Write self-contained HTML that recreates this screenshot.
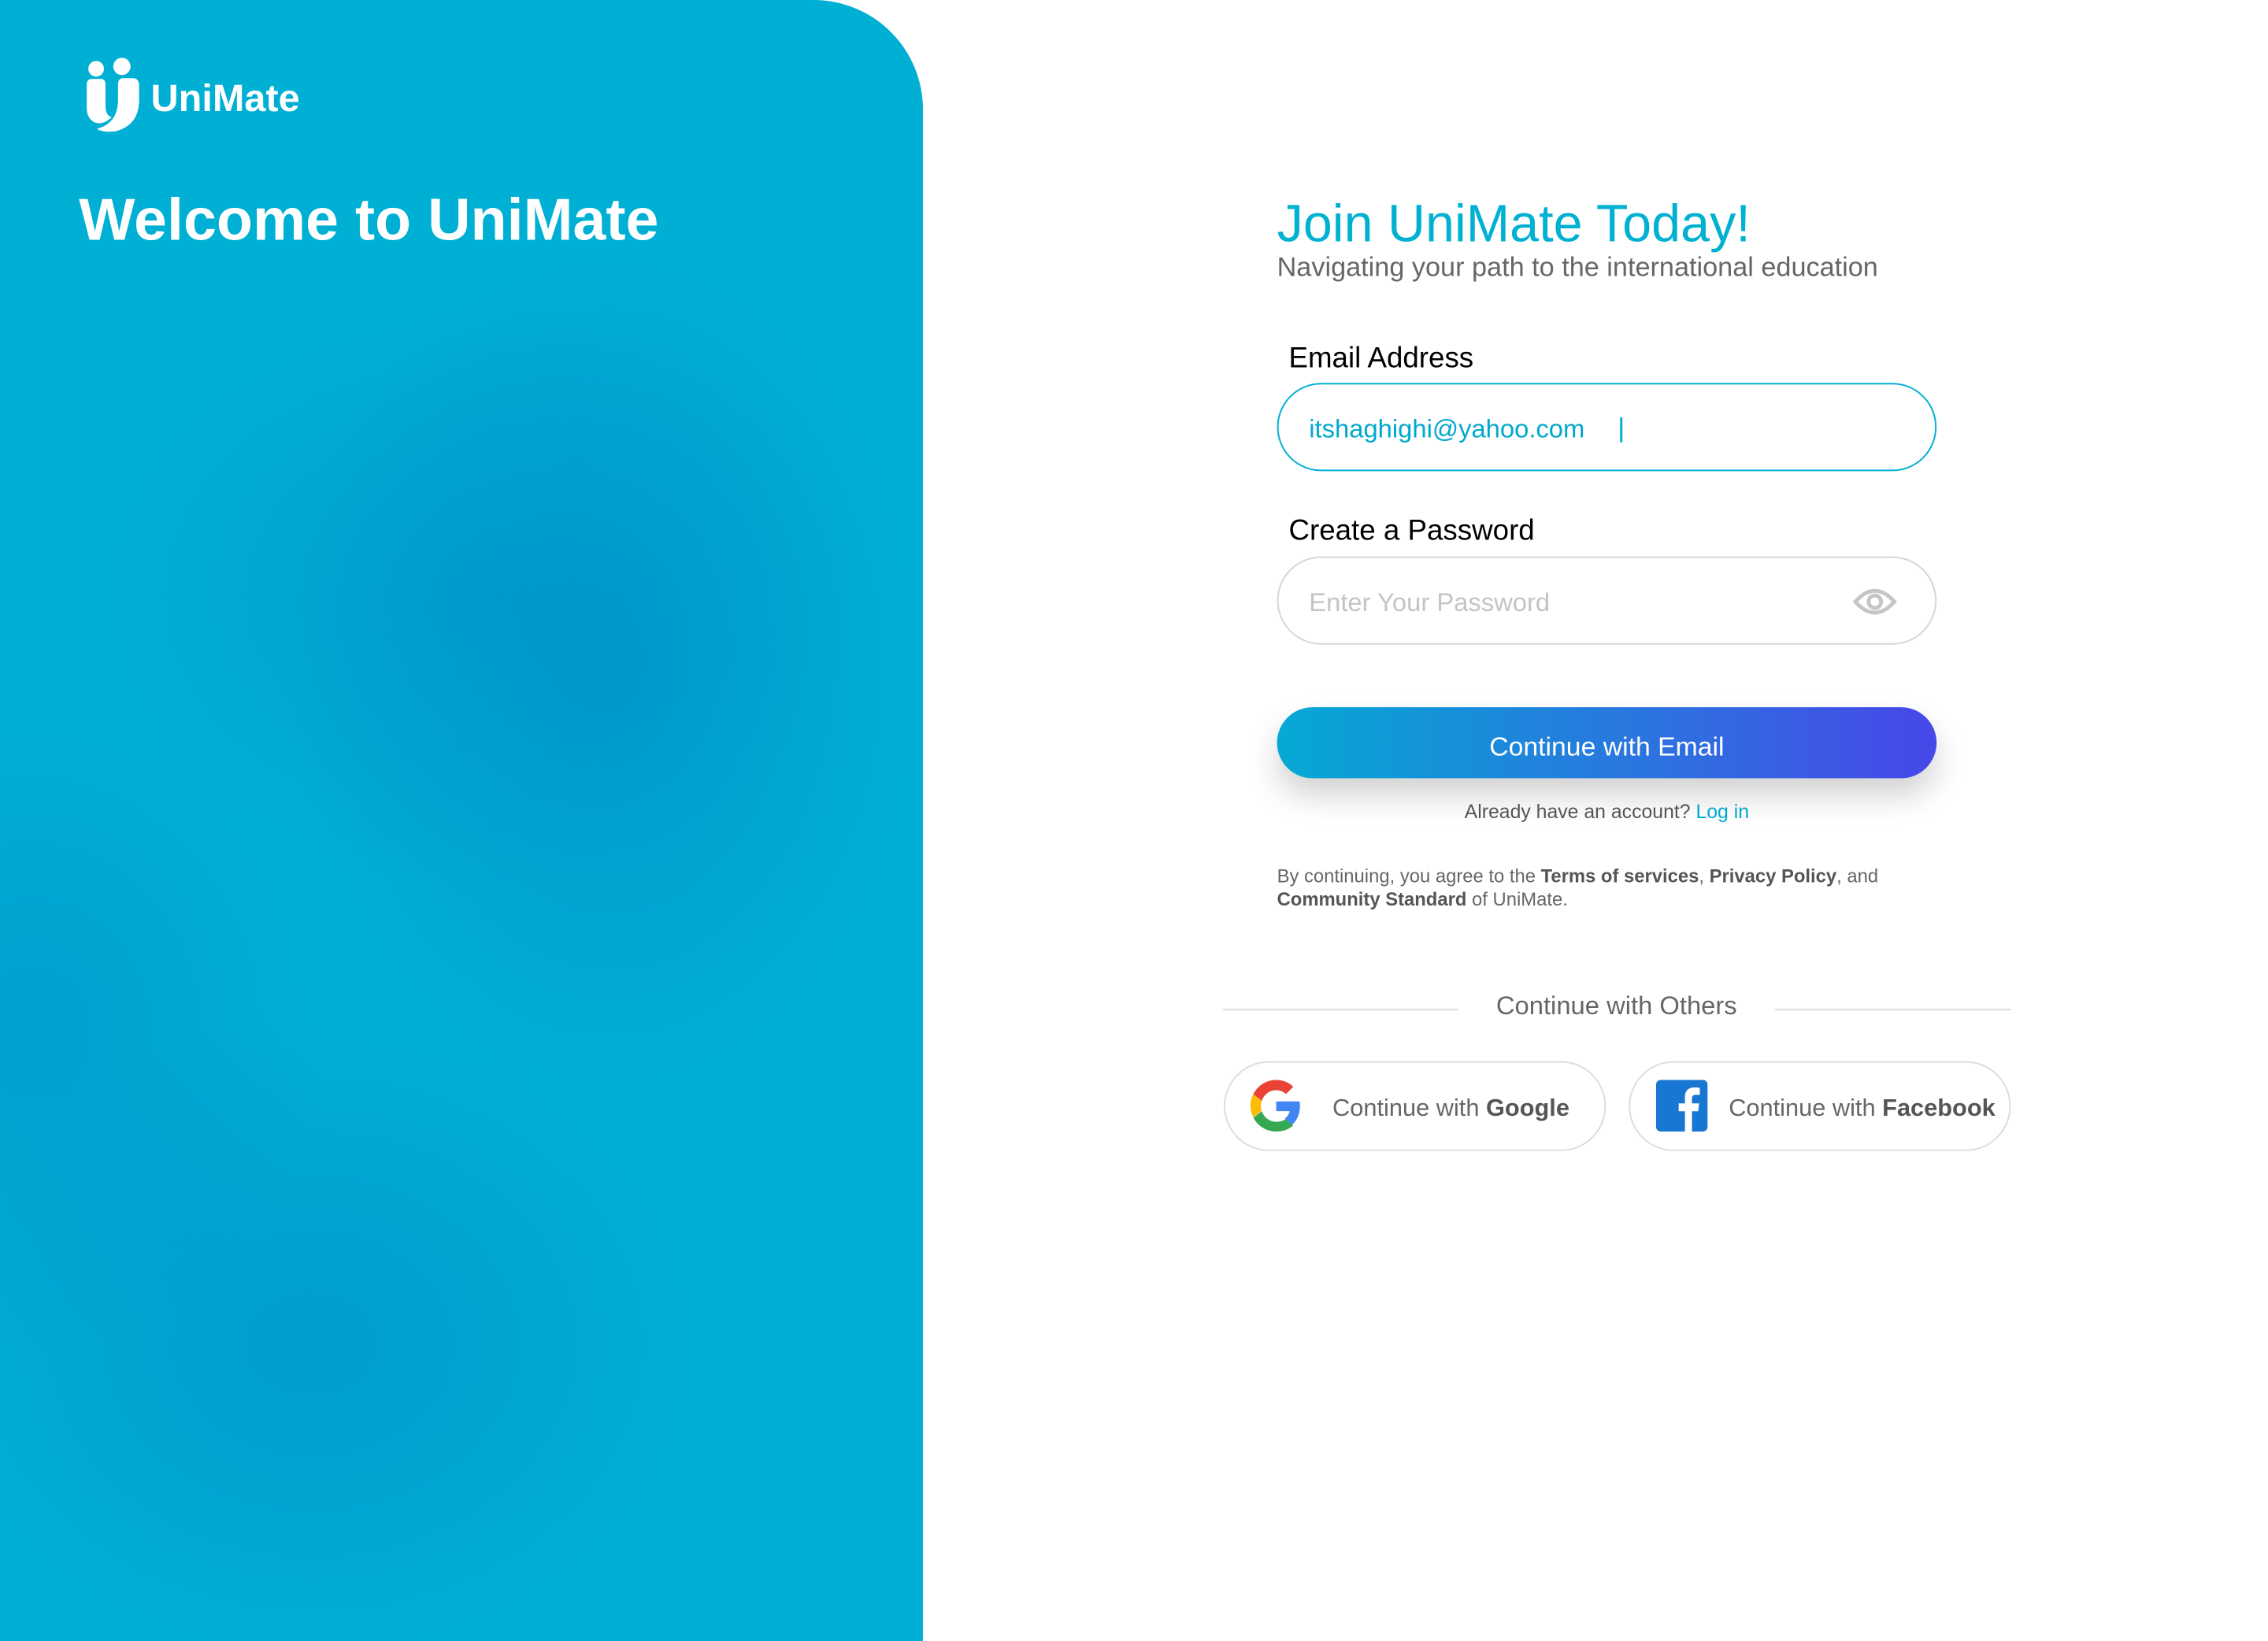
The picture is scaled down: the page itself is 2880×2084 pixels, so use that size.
<!DOCTYPE html>
<html><head><meta charset="utf-8"><style>
*{margin:0;padding:0;box-sizing:border-box}
body{width:2880px;height:2048px;background:#fff;font-family:"Liberation Sans",sans-serif;position:relative;overflow:hidden}
#w{position:absolute;left:0;top:0;width:2902px;height:2064px;transform:scale(0.9924);transform-origin:0 0}
.left{position:absolute;left:0;top:0;width:1181px;height:2100px;border-top-right-radius:140px;overflow:hidden;
background:
radial-gradient(ellipse 420px 560px at 780px 860px,rgba(0,140,200,.6),rgba(0,140,200,0)),
radial-gradient(ellipse 500px 380px at 600px 760px,rgba(0,140,200,.45),rgba(0,140,200,0)),
radial-gradient(ellipse 520px 420px at 400px 1720px,rgba(0,140,200,.55),rgba(0,140,200,0)),
radial-gradient(ellipse 380px 420px at 40px 1320px,rgba(0,140,200,.45),rgba(0,140,200,0)),
#00b0d4}
.abs{position:absolute;white-space:nowrap}
.input{position:absolute;left:1634px;width:844px;height:113px;border-radius:57px;background:#fff}
.soc{position:absolute;top:1358px;height:115px;width:489px;border:2px solid #ddd;border-radius:58px;background:#fff}
</style></head><body><div id="w">
<div class="left">
<svg class="abs" style="left:108px;top:74px" width="74" height="96" viewBox="108 74 74 96">
<circle cx="123" cy="88" r="10" fill="#fff"/>
<circle cx="156" cy="85" r="11" fill="#fff"/>
<path d="M111 108 Q111 101 118 101 L129 101 Q135 101 135 108 L135 135 Q135 148 143 150 Q132 160 122 157 Q111 152 111 138 Z" fill="#fff"/>
<path d="M151 108 Q151 100 158 100 L170 100 Q178 100 178 110 L178 128 Q178 160 148 168 Q132 170 124 165 Q150 158 151 130 Z" fill="#fff"/>
</svg>
<div class="abs" style="left:193px;top:98px;font-size:49px;font-weight:bold;color:#fff">UniMate</div>
<div class="abs" style="left:101px;top:238px;font-size:76px;font-weight:bold;color:#fff">Welcome to UniMate</div>
</div>

<div class="abs" style="left:1634px;top:248px;font-size:67px;color:#00b1d2">Join UniMate Today!</div>
<div class="abs" style="left:1634px;top:323px;font-size:34.5px;color:#666">Navigating your path to the international education</div>

<div class="abs" style="left:1649px;top:437px;font-size:37px;color:#000">Email Address</div>
<div class="input" style="top:490px;border:2px solid #00b1d2"></div>
<div class="abs" style="left:1675px;top:530px;font-size:33px;color:#00a9cc">itshaghighi@yahoo.com</div>
<div class="abs" style="left:2073px;top:534px;width:3px;height:32px;background:#00b1d2"></div>

<div class="abs" style="left:1649px;top:658px;font-size:37px;color:#000">Create a Password</div>
<div class="input" style="top:712px;border:2px solid #d6d6d6"></div>
<div class="abs" style="left:1675px;top:752px;font-size:33px;color:#c4c4c4">Enter Your Password</div>
<svg class="abs" style="left:2371px;top:750px" width="56" height="40" viewBox="0 0 56 40">
<path d="M3 20 Q28 -8 53 20 Q28 48 3 20 Z" fill="none" stroke="#c6c6c6" stroke-width="5"/>
<circle cx="28" cy="20" r="8" fill="none" stroke="#c6c6c6" stroke-width="5"/>
</svg>

<div class="abs" style="left:1634px;top:905px;width:844px;height:91px;border-radius:46px;background:linear-gradient(90deg,#05a9d4,#2e70e0 60%,#4747e8);box-shadow:0 22px 40px rgba(0,0,0,.18);color:#fff;font-size:34px;text-align:center;line-height:91px;padding-top:6px">Continue with Email</div>

<div class="abs" style="left:1634px;width:844px;top:1025px;text-align:center;font-size:25px;color:#555">Already have an account? <span style="color:#00a9cc">Log in</span></div>

<div class="abs" style="left:1634px;top:1107px;font-size:24px;color:#666;line-height:30px">By continuing, you agree to the <b style="color:#555">Terms of services</b>, <b style="color:#555">Privacy Policy</b>, and<br><b style="color:#555">Community Standard</b> of UniMate.</div>

<div class="abs" style="left:1564px;top:1291px;width:302px;height:2px;background:#ddd"></div>
<div class="abs" style="left:2271px;top:1291px;width:302px;height:2px;background:#ddd"></div>
<div class="abs" style="left:1866px;width:405px;top:1268px;text-align:center;font-size:33px;color:#666">Continue with Others</div>

<div class="soc" style="left:1566px"></div>
<svg class="abs" style="left:1600px;top:1382px" width="66" height="66" viewBox="0 0 48 48">
<path fill="#EA4335" d="M24 9.5c3.5 0 6.6 1.2 9.1 3.6l6.8-6.8C35.8 2.4 30.3 0 24 0 14.6 0 6.6 5.4 2.7 13.3l7.9 6.2C12.5 13.6 17.8 9.5 24 9.5z"/>
<path fill="#4285F4" d="M46.1 24.5c0-1.6-.1-3.1-.4-4.5H24v9h12.4c-.5 2.9-2.2 5.3-4.6 7l7.2 5.6c4.2-3.9 7.1-9.7 7.1-17.1z"/>
<path fill="#FBBC05" d="M10.5 28.6c-.5-1.4-.8-3-.8-4.6s.3-3.2.8-4.6l-7.9-6.2C1 16.5 0 20.1 0 24s1 7.5 2.7 10.7l7.8-6.1z"/>
<path fill="#34A853" d="M24 48c6.5 0 11.9-2.1 15.9-5.8l-7.2-5.6c-2.1 1.4-4.9 2.3-8.7 2.3-6.2 0-11.5-4.2-13.4-9.9l-7.9 6.1C6.6 42.6 14.6 48 24 48z"/>
</svg>
<div class="abs" style="left:1705px;top:1400px;font-size:31px;color:#666">Continue with <span style="color:#555;font-weight:600">Google</span></div>

<div class="soc" style="left:2084px"></div>
<svg class="abs" style="left:2119px;top:1382px" width="66" height="66" viewBox="0 0 66 66">
<rect width="66" height="66" rx="6" fill="#1877d2"/>
<path d="M46 66V40h8l1.2-10H46v-6c0-3 1-5 5-5h5v-9c-1-.1-4-.4-7-.4-7 0-12 4-12 12v8.4h-8V40h8v26z" fill="#fff"/>
</svg>
<div class="abs" style="left:2212px;top:1400px;font-size:31px;color:#666">Continue with <span style="color:#555;font-weight:600">Facebook</span></div>
</div></body></html>
